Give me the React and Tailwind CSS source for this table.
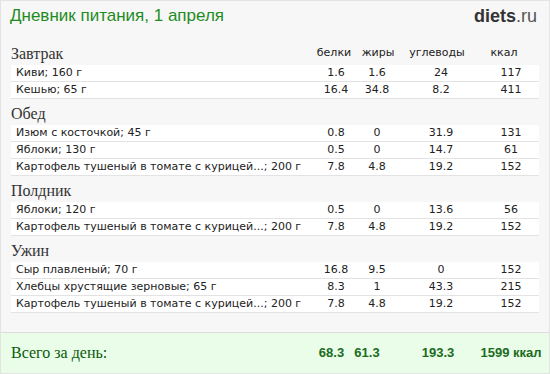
import React from "react";

const sections = [
  {
    name: "Завтрак",
    rows: [
      ["Киви; 160 г", "1.6", "1.6", "24", "117"],
      ["Кешью; 65 г", "16.4", "34.8", "8.2", "411"],
    ],
  },
  {
    name: "Обед",
    rows: [
      ["Изюм с косточкой; 45 г", "0.8", "0", "31.9", "131"],
      ["Яблоки; 130 г", "0.5", "0", "14.7", "61"],
      ["Картофель тушеный в томате с курицей...; 200 г", "7.8", "4.8", "19.2", "152"],
    ],
  },
  {
    name: "Полдник",
    rows: [
      ["Яблоки; 120 г", "0.5", "0", "13.6", "56"],
      ["Картофель тушеный в томате с курицей...; 200 г", "7.8", "4.8", "19.2", "152"],
    ],
  },
  {
    name: "Ужин",
    rows: [
      ["Сыр плавленый; 70 г", "16.8", "9.5", "0", "152"],
      ["Хлебцы хрустящие зерновые; 65 г", "8.3", "1", "43.3", "215"],
      ["Картофель тушеный в томате с курицей...; 200 г", "7.8", "4.8", "19.2", "152"],
    ],
  },
];

const sans = "font-['DejaVu_Sans',Verdana,sans-serif]";
const serif = "font-['Liberation_Serif',Georgia,serif]";

function Row({ r }) {
  return (
    <div
      className={`mx-[10px] grid h-[17px] grid-cols-[305px_40px_42px_86px_54px] border-b border-[#e3e3e3] bg-white text-[11px] leading-[16px] text-[#222] ${sans}`}
    >
      <div className="whitespace-nowrap pl-[5px]">{r[0]}</div>
      <div className="text-center">{r[1]}</div>
      <div className="text-center">{r[2]}</div>
      <div className="text-center">{r[3]}</div>
      <div className="text-center">{r[4]}</div>
    </div>
  );
}

export default function App() {
  return (
    <div className="flex h-[374px] w-[550px] flex-col border border-[#e3e3e3] bg-[#f7f7f7]">
      <div className="flex h-[38px] items-start justify-between pl-[9px] pr-[12px] pt-[5px]">
        <div className="font-['Liberation_Sans',Arial,sans-serif] text-[17px] leading-[20px] text-[#1f8c1f]">
          Дневник питания, 1 апреля
        </div>
        <div className="font-['Liberation_Sans',Arial,sans-serif] text-[18px] leading-[20px] text-[#333]">
          <span className="font-bold">diets</span>
          <span className="text-[#555]">.ru</span>
        </div>
      </div>
      {sections.map((s, i) => (
        <div key={s.name}>
          <div className="relative flex h-[26px] items-end pb-[3px] pl-[10px]">
            <div className={`${serif} text-[16px] leading-[17px] text-[#333]`}>{s.name}</div>
            {i === 0 && (
              <div
                className={`absolute bottom-[5px] left-[10px] grid w-[525px] grid-cols-[303px_40px_48px_70px_64px] text-[11px] leading-[14px] text-[#222] ${sans}`}
              >
                <div />
                <div className="text-center">белки</div>
                <div className="text-center">жиры</div>
                <div className="text-center">углеводы</div>
                <div className="text-center">ккал</div>
              </div>
            )}
          </div>
          {s.rows.map((r, j) => (
            <Row key={j} r={r} />
          ))}
        </div>
      ))}
      <div className="flex-1" />
      <div className="flex h-[41px] items-center border-t border-[#dcdcdc] bg-[#e9fde9]">
        <div className={`w-[310px] whitespace-nowrap pl-[10px] ${serif} text-[16px] leading-[20px] text-[#0b5a0b]`}>
          Всего за день:
        </div>
        <div className="flex items-center whitespace-nowrap font-['Liberation_Sans',Arial,sans-serif] text-[13px] font-bold leading-[18px] text-[#1d6b1d]">
          <div className="w-[41px] text-center">68.3</div>
          <div className="w-[30px] text-center">61.3</div>
          <div className="w-[26px]" />
          <div className="w-[60px] text-center">193.3</div>
          <div className="w-[10px]" />
          <div className="w-[66px] text-center">1599 ккал</div>
        </div>
      </div>
    </div>
  );
}
